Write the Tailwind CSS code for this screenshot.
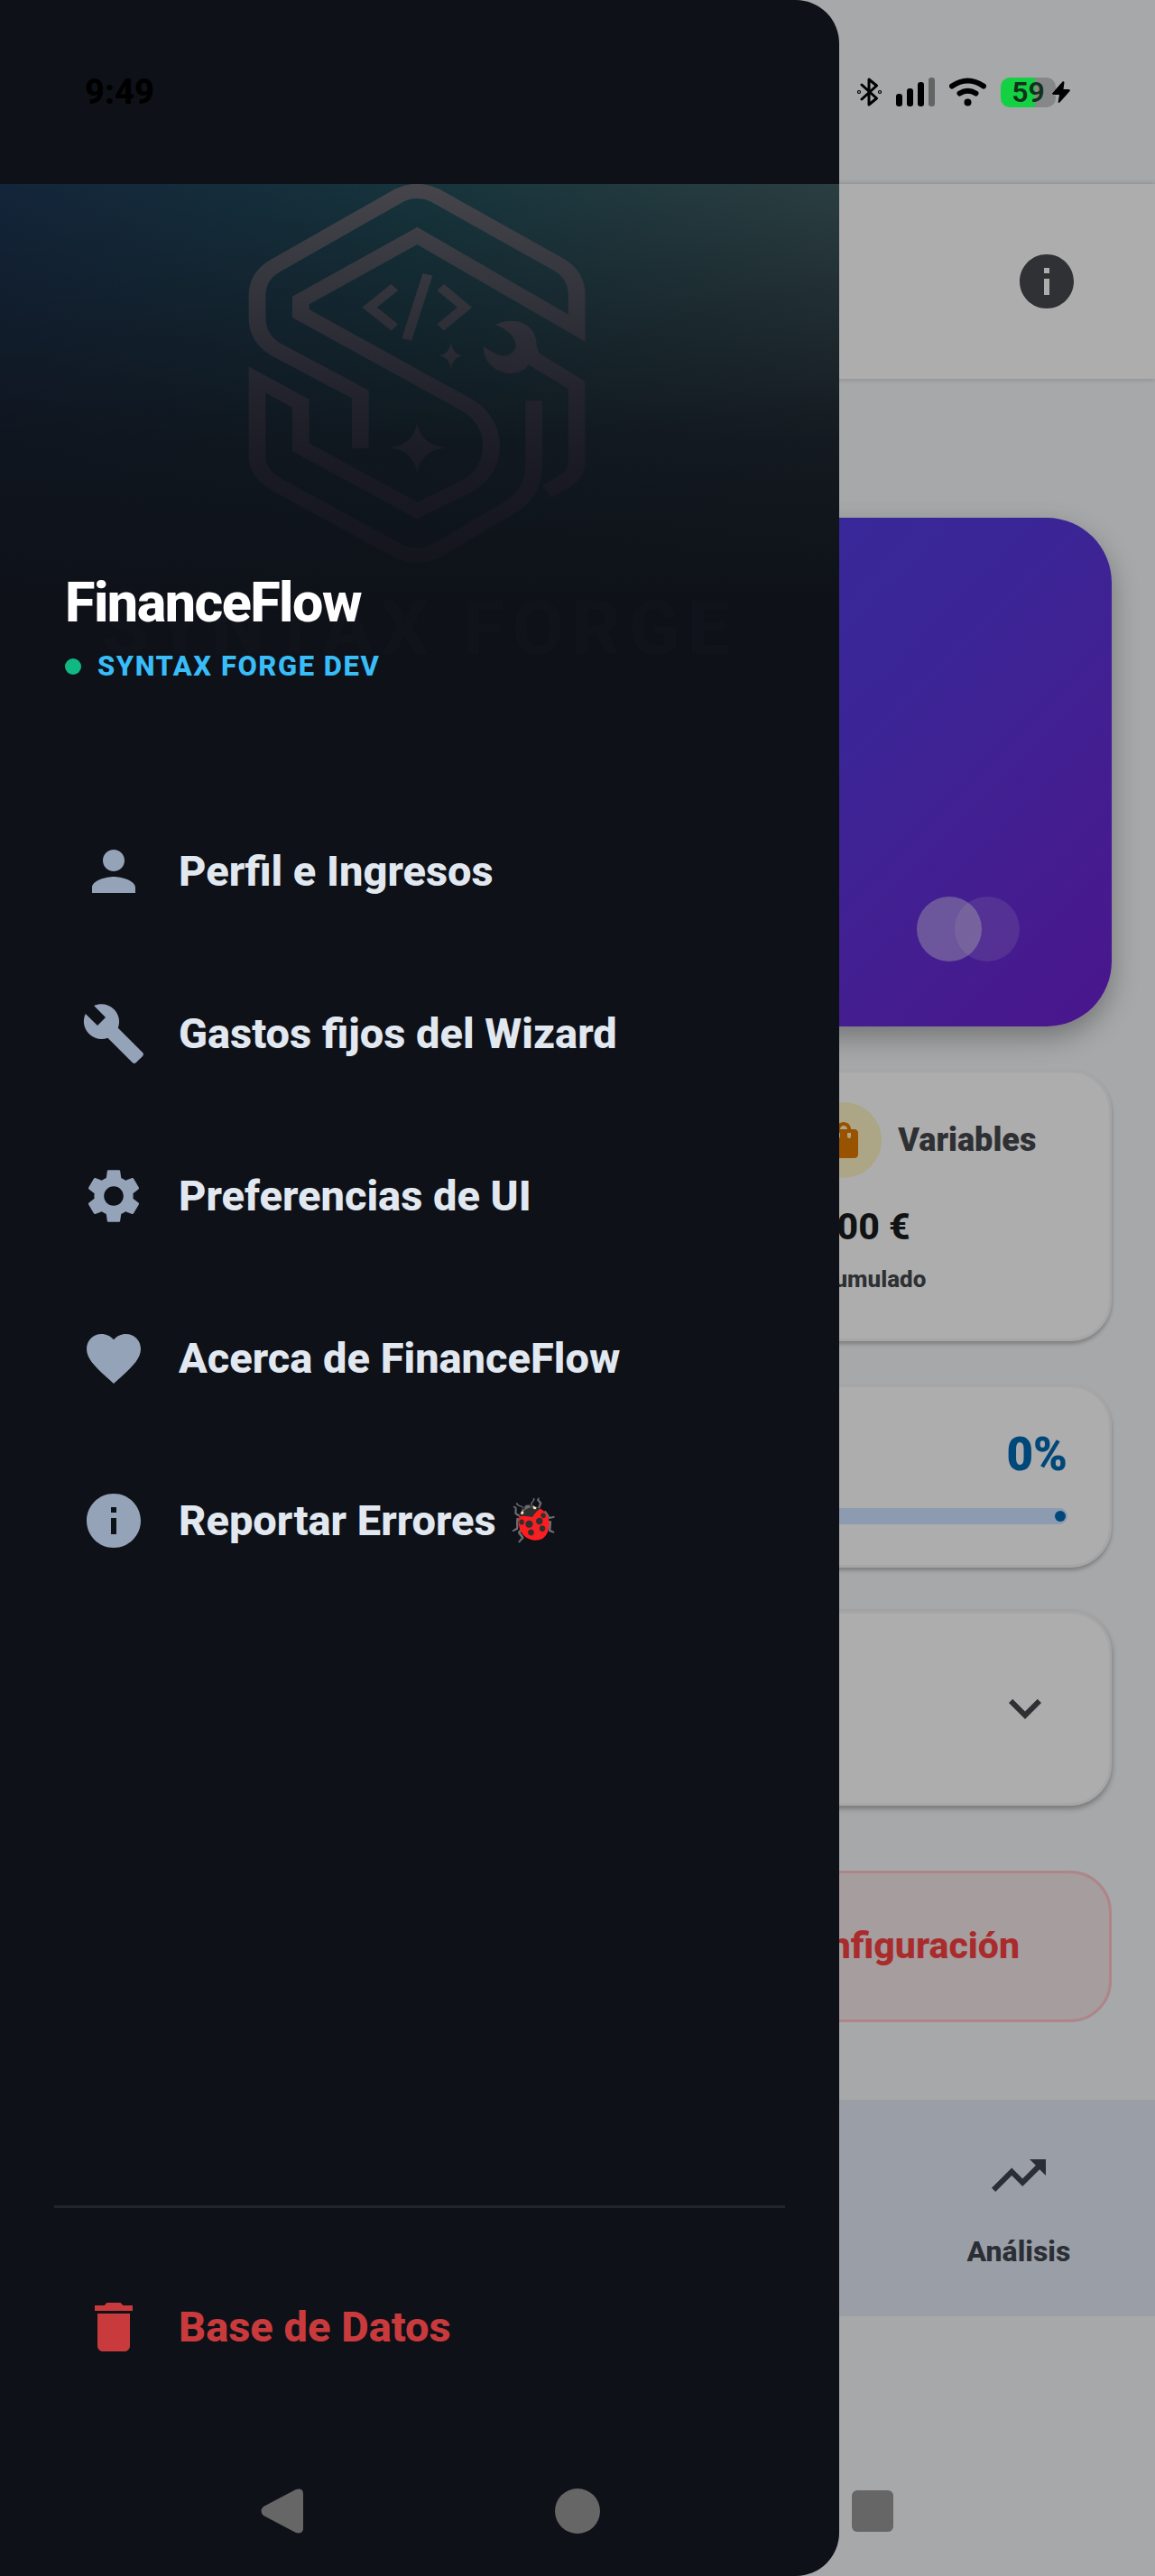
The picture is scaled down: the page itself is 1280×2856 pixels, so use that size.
<!DOCTYPE html>
<html lang="es">
<head>
<meta charset="utf-8">
<meta name="viewport" content="width=device-width, initial-scale=1">
<title>FinanceFlow</title>
<script src="https://cdn.jsdelivr.net/npm/@tailwindcss/browser@4"></script>
</head>
<body class="bg-[#a6a8aa] font-[Roboto,sans-serif] font-extrabold">
<div class="relative flex min-h-screen flex-col overflow-hidden">

  <!-- Dimmed dashboard behind the drawer -->
  <header class="mt-51 flex h-54 items-center justify-end bg-[#adadad] pr-21 shadow-[0_0_6px_rgba(0,0,0,0.22)]">
    <button aria-label="Información" class="text-[#303134]">
      <svg class="size-18" viewBox="0 0 24 24" fill="currentColor"><path d="M12 2C6.480 2 2 6.480 2 12s4.480 10 10 10 10-4.480 10-10S17.520 2 12 2zm1 15h-2v-6h2v6zm0-8h-2V7h2v2z"/></svg>
    </button>
  </header>

  <main class="flex flex-col gap-12 px-12 pt-[154px]">
    <section class="flex h-141 items-end justify-end rounded-[72px] bg-linear-135 from-[#2f33a5] via-[#3b2596] via-65% to-[#4a158c] pr-[102px] pb-18 shadow-[0_12px_30px_rgba(0,0,0,0.3)]">
      <span class="size-18 rounded-full bg-[#adadad]/40"></span>
      <span class="-ml-[30px] size-18 rounded-full bg-[#adadad]/15"></span>
    </section>

    <section class="grid grid-cols-3 gap-[30px]">
      <article class="col-start-3 h-[301px] rounded-[46px] border-3 border-[#a6a6a6] bg-[#adadad] px-[33px] pt-[33px] shadow-[0_3px_4px_rgba(0,0,0,0.25)]">
        <div class="flex items-center gap-[18px]">
          <span class="flex size-21 shrink-0 items-center justify-center rounded-full bg-[#aca686] text-[#985200]">
            <svg class="size-12" viewBox="0 0 24 24" fill="currentColor"><path d="M18 6h-2c0-2.210-1.790-4-4-4S8 3.790 8 6H6c-1.100 0-2 .9-2 2v12c0 1.100.9 2 2 2h12c1.100 0 2-.9 2-2V8c0-1.100-.9-2-2-2zm-8 4c0 .55-.45 1-1 1s-1-.45-1-1V8h2v2zm2-6c1.100 0 2 .9 2 2h-4c0-1.100.9-2 2-2zm4 6c0 .55-.45 1-1 1s-1-.45-1-1V8h2v2z"/></svg>
          </span>
          <h2 class="text-[36px] leading-[48px] font-black text-[#2e3033]">Variables</h2>
        </div>
        <p class="mt-[30px] text-[41px] leading-[48px] whitespace-nowrap text-[#111214]">0,00 €</p>
        <p class="mt-4 text-[26px] leading-9 text-[#2e3033]">Acumulado</p>
      </article>
    </section>

    <section class="rounded-[46px] border-3 border-[#a6a6a6] bg-[#adadad] px-[46px] pt-[42px] pb-[45px] shadow-[0_3px_4px_rgba(0,0,0,0.25)]">
      <p class="text-right text-[51px] leading-[66px] font-black text-[#00477a]">0%</p>
      <div role="progressbar" aria-valuenow="0" aria-valuemin="0" aria-valuemax="100" class="mt-[26px] flex h-[18px] items-center justify-end rounded-full bg-[#8c9bb0] pr-0.5">
        <span class="size-3 rounded-full bg-[#00477a]"></span>
      </div>
    </section>

    <section class="flex h-54 items-center justify-end rounded-[46px] border-3 border-[#a6a6a6] bg-[#adadad] pr-[57px] shadow-[0_3px_6px_rgba(0,0,0,0.32)]">
      <button aria-label="Expandir" class="text-[#2e3033]">
        <svg class="size-18" viewBox="0 0 24 24" fill="currentColor"><path d="M16.590 8.590 12 13.170 7.410 8.590 6 10l6 6 6-6z"/></svg>
      </button>
    </section>

    <button class="mt-6 flex h-42 items-center justify-end rounded-[46px] border-3 border-[#ae8588] bg-[#a69d9f] pr-[99px] text-[41px] text-[#a92c2d]">Configuración</button>
  </main>

  <nav aria-label="Secciones" class="mt-[86px] grid h-60 grid-cols-4 gap-6 bg-[#9a9ea6]">
    <a href="#analisis" class="col-start-4 flex flex-col items-center pt-12 text-[#2b2f35]">
      <svg class="size-18" viewBox="0 0 24 24" fill="currentColor"><path d="m16 6 2.290 2.290-4.880 4.880-4-4L2 16.590 3.410 18l6-6 4 4 6.300-6.290L22 12V6z"/></svg>
      <span class="mt-[30px] text-[32px] leading-9">Análisis</span>
    </a>
  </nav>
  <div class="h-72"></div>

  <!-- Navigation drawer -->
  <aside class="absolute inset-y-0 left-0 flex w-[930px] max-w-full flex-col overflow-hidden rounded-r-[48px] bg-[#0e1118] pt-51">
    <header class="relative flex h-[618px] flex-col pl-18">
      <div class="absolute inset-0 bg-linear-to-r from-[#13253a] via-[#16343c] to-[#2b3e41]"></div>
      <div class="absolute inset-0 bg-linear-to-b from-[#0e1118]/0 via-[#0e1118]/80 via-46% to-[#0e1118] to-76%"></div>
      <div class="absolute inset-x-0 top-0 flex flex-col items-center">
        <svg class="h-[429px] w-96" viewBox="164 63 860 1120" preserveAspectRatio="none" fill="none" stroke="url(#fade)" stroke-width="42">
          <defs>
            <linearGradient id="fade" gradientUnits="userSpaceOnUse" x1="0" y1="63" x2="0" y2="1160">
              <stop offset="0" stop-color="#46454c"/>
              <stop offset=".3" stop-color="#32333b"/>
              <stop offset=".55" stop-color="#22232c"/>
              <stop offset=".75" stop-color="#191a23"/>
              <stop offset="1" stop-color="#14151d"/>
            </linearGradient>
          </defs>
          <path d="M447 828V672L235 540Q191 508 191 450V385Q191 330 235 300L545 95Q588 72 631 95L945 300Q984 330 984 385V480L588 213 299 400V438L715 705Q772 750 772 820 772 895 715 935L588 1008 299 825V698L191 630V850Q191 900 235 930L540 1125Q588 1150 636 1125L830 990Q878 950 878 870V690"/>
          <path d="M875 568 984 645V870Q984 905 945 930L910 953"/>
          <path stroke="none" fill="url(#fade)" d="M783 470Q800 458 830 460C865 464 886 495 884 530L892 555 855 598Q835 614 815 611C775 606 750 570 753 533Q785 560 805 561 830 556 833 532 833 495 783 470Z"/>
          <path stroke-width="25" d="M532 362 470 420 532 478M646 362 706 420 646 478M614 325 562 513"/>
          <path stroke="none" fill="url(#fade)" d="M672 522Q676 555 700 560 676 565 672 598 668 565 644 560 668 555 672 522ZM588 752Q596 817 658 826 596 835 588 903 580 835 520 826 580 817 588 752Z"/>
        </svg>
        <span class="mt-4 text-[84px] leading-[96px] tracking-widest whitespace-nowrap text-[#11131a]" aria-hidden="true">SYNTAX FORGE</span>
      </div>
      <h1 class="relative mt-[428px] text-[61px] leading-18 tracking-tight text-white">FinanceFlow</h1>
      <p class="relative mt-[17px] flex items-center gap-[18px] text-[31px] leading-9 tracking-wider text-[#38bdf8]">
        <span class="size-[18px] rounded-full bg-[#10b981]"></span>SYNTAX FORGE DEV
      </p>
    </header>

    <nav aria-label="Menú" class="mt-15 flex grow flex-col gap-3 px-[30px] text-[47px] text-[#e2e8f0]">
      <a href="#perfil" class="flex h-42 items-center gap-9 px-[60px]">
        <svg class="size-18 text-[#94a3b8]" viewBox="0 0 24 24" fill="currentColor"><path d="M12 12c2.210 0 4-1.790 4-4s-1.790-4-4-4-4 1.790-4 4 1.790 4 4 4zm0 2c-2.670 0-8 1.340-8 4v2h16v-2c0-2.660-5.330-4-8-4z"/></svg>
        Perfil e Ingresos
      </a>
      <a href="#gastos" class="flex h-42 items-center gap-9 px-[60px]">
        <svg class="size-18 text-[#94a3b8]" viewBox="0 0 24 24" fill="currentColor"><path d="m22.700 19-9.100-9.100c.9-2.300.4-5-1.500-6.900-2-2-5-2.400-7.400-1.300L9 6 6 9 1.600 4.700C.4 7.100.9 10.100 2.900 12.100c1.900 1.900 4.600 2.400 6.900 1.500l9.100 9.100c.4.4 1 .4 1.400 0l2.300-2.300c.5-.4.5-1.100.1-1.400z"/></svg>
        Gastos fijos del Wizard
      </a>
      <a href="#preferencias" class="flex h-42 items-center gap-9 px-[60px]">
        <svg class="size-18 text-[#94a3b8]" viewBox="0 0 24 24" fill="currentColor"><path d="M19.140 12.940c.04-.3.06-.61.06-.94 0-.32-.02-.64-.07-.94l2.030-1.580c.18-.14.23-.41.12-.61l-1.920-3.320c-.12-.22-.37-.29-.59-.22l-2.390.96c-.5-.38-1.030-.7-1.620-.94l-.36-2.540c-.04-.24-.24-.41-.48-.41h-3.840c-.24 0-.43.17-.47.41l-.36 2.540c-.59.24-1.130.57-1.620.94l-2.390-.96c-.22-.08-.47 0-.59.22L2.740 8.870c-.12.21-.08.47.12.61l2.030 1.580c-.05.3-.09.63-.09.94s.02.64.07.94l-2.030 1.580c-.18.14-.23.41-.12.61l1.920 3.320c.12.22.37.29.59.22l2.390-.96c.5.38 1.030.7 1.620.94l.36 2.540c.05.24.24.41.48.41h3.840c.24 0 .44-.17.47-.41l.36-2.540c.59-.24 1.130-.56 1.620-.94l2.390.96c.22.08.47 0 .59-.22l1.920-3.320c.12-.22.07-.47-.12-.61l-2.010-1.580zM12 15.600c-1.980 0-3.600-1.620-3.600-3.600s1.620-3.600 3.600-3.600 3.600 1.620 3.600 3.600-1.620 3.600-3.600 3.600z"/></svg>
        Preferencias de UI
      </a>
      <a href="#acerca" class="flex h-42 items-center gap-9 px-[60px]">
        <svg class="size-18 text-[#94a3b8]" viewBox="0 0 24 24" fill="currentColor"><path d="m12 21.350-1.450-1.320C5.400 15.360 2 12.280 2 8.500 2 5.420 4.420 3 7.500 3c1.740 0 3.410.81 4.500 2.090C13.090 3.810 14.760 3 16.500 3 19.580 3 22 5.420 22 8.500c0 3.780-3.400 6.860-8.550 11.540L12 21.350z"/></svg>
        Acerca de FinanceFlow
      </a>
      <a href="#errores" class="flex h-42 items-center gap-9 px-[60px]">
        <svg class="size-18 text-[#94a3b8]" viewBox="0 0 24 24" fill="currentColor"><path d="M12 2C6.480 2 2 6.480 2 12s4.480 10 10 10 10-4.480 10-10S17.520 2 12 2zm1 15h-2v-6h2v6zm0-8h-2V7h2v2z"/></svg>
        Reportar Errores 🐞
      </a>
    </nav>

    <div class="px-15 pb-48">
      <hr class="border-t-3 border-[#20242b]">
      <button class="mt-12 flex h-42 items-center gap-9 px-[30px] text-[47px] text-[#c93a3c]">
        <svg class="size-18" viewBox="0 0 24 24" fill="currentColor"><path d="M6 19c0 1.100.9 2 2 2h8c1.100 0 2-.9 2-2V7H6v12zM19 4h-3.500l-1-1h-5l-1 1H5v2h14V4z"/></svg>
        Base de Datos
      </button>
    </div>
  </aside>

  <!-- Device status bar -->
  <div class="absolute inset-x-0 top-0 flex h-51 items-center justify-between px-[94px]">
    <time class="text-[38px] leading-10 text-black">9:49</time>
    <div class="flex items-center gap-4 text-black">
      <svg class="h-8 w-[27px]" viewBox="0 0 27 32" fill="none" stroke="currentColor" stroke-width="3" stroke-linejoin="round" stroke-linecap="round"><path d="M5 8 21.500 23 13 30V2l8.500 7L5 24"/><circle cx="2" cy="16" r=".6"/><circle cx="25" cy="16" r=".6"/></svg>
      <svg class="h-8 w-[43px]" viewBox="0 0 43 32" fill="currentColor"><rect y="18" width="7" height="14" rx="3"/><rect x="12" y="12" width="7" height="20" rx="3"/><rect x="24" y="5" width="7" height="27" rx="3"/><rect x="36" width="7" height="32" rx="3" fill="#636464"/></svg>
      <svg class="h-8 w-[41px]" viewBox="0 0 41 32" fill="none" stroke="currentColor" stroke-width="6" stroke-linecap="round"><path d="M3 9.500Q20.500-2.500 38 9.500M11.500 17.500Q20.500 12 29.500 17.500"/><circle cx="20.500" cy="27.500" r="4" fill="currentColor" stroke="none"/></svg>
      <div class="flex items-center">
        <span class="flex h-[33px] w-[61px] items-center justify-center rounded-[10px] bg-linear-to-r from-[#13d143] from-62% to-[#868787] to-62% text-[32px] leading-none font-semibold text-[#12301a]">59</span>
        <svg class="-ml-1 h-6 w-5" viewBox="0 0 20 24" fill="currentColor"><path d="M12 0 0 13.500Q0 15 2 15H8L6.500 24 8.500 23.500 20 10.500Q20 9 18 9H12.500L13.500 1Z" stroke="#a7a8aa" stroke-width="1" paint-order="stroke"/></svg>
      </div>
    </div>
  </div>

  <!-- Device navigation bar -->
  <div class="absolute inset-x-0 bottom-0 flex h-36 items-center justify-center gap-[277px] text-[#666]">
    <button aria-label="Atrás"><svg class="size-[50px]" viewBox="0 0 50 50" fill="currentColor"><path d="M4 20 40 1Q48-1 48 6V44Q48 51 40 49L4 30Q-1 25 4 20Z"/></svg></button>
    <button aria-label="Inicio" class="size-[50px] rounded-full bg-[#666]"></button>
    <button aria-label="Recientes" class="flex size-[50px] items-center justify-center"><span class="size-[46px] rounded-[6px] bg-[#666]"></span></button>
  </div>
</div>
</body>
</html>
